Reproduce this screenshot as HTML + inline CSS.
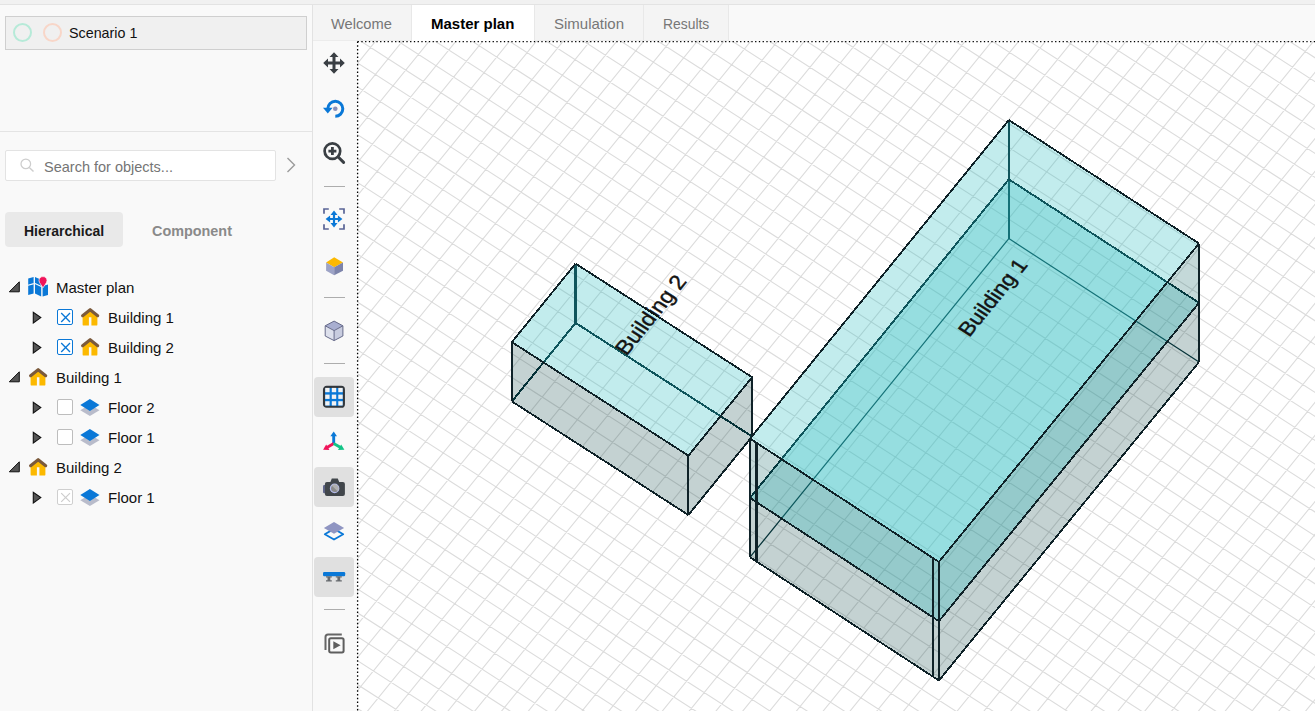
<!DOCTYPE html>
<html lang="en"><head><meta charset="utf-8"><title>Master plan</title>
<style>
*{box-sizing:border-box;margin:0;padding:0}
html,body{width:1315px;height:711px;overflow:hidden;background:#f9f9f9;font-family:"Liberation Sans", Arial, sans-serif;font-size:15px;color:#111}
.abs{position:absolute}
#topstrip{left:0;top:0;width:1315px;height:5px;background:#f1f1f1;border-bottom:1px solid #e3e3e3}
#left{left:0;top:5px;width:313px;height:706px;background:#f9f9f9;border-right:1px solid #e2e2e2}
#scn{left:5px;top:16px;width:302px;height:34px;background:#f0f0f0;border:1px solid #cfcfcf}
.ring{width:19px;height:19px;border-radius:50%;border:2.7px solid #b6ead8}
#sep1{left:0;top:131px;width:312px;height:1px;background:#e4e4e4}
#search{left:5px;top:150px;width:271px;height:31px;background:#fff;border:1px solid #e3e3e3;border-radius:2px}
.t{position:absolute;white-space:nowrap;line-height:20px;height:20px}
#hier{left:5px;top:212px;width:118px;height:35px;background:#e9e9e9;border-radius:4px}
.row{position:absolute;left:0;width:312px;height:30px}
.cb{position:absolute;width:16px;height:16px;background:#fff;border-radius:2px}
#tabs{left:313px;top:5px;width:1002px;height:36px;background:#f9f9f9}
.tab{position:absolute;top:0;height:36px;background:#f4f4f4;border-right:1px solid #e8e8e8;border-bottom:1px solid #ececec}
.tab.act{background:#fff;border-bottom:none;height:36px}
#tool{left:313px;top:40px;width:44px;height:671px;background:#f9f9f9;border-top:1px solid #ececec}
.hl{position:absolute;left:1px;width:40px;height:40px;border-radius:4px;background:#e0e0e0}
.sepl{position:absolute;left:11px;width:21px;height:1.4px;background:#adadad}
.ic{position:absolute;left:9px;width:24px;height:24px}
#canvas{left:357px;top:41px;width:958px;height:670px;overflow:hidden;background:#fff}
#dots{left:356px;top:40px;width:959px;height:671px;pointer-events:none}
</style></head><body>
<div id="topstrip" class="abs"></div>
<div id="left" class="abs"></div>
<div id="scn" class="abs"></div>
<div class="abs ring" style="left:12.5px;top:22.5px;border-color:#b6ead8"></div>
<div class="abs ring" style="left:42.5px;top:22.5px;border-color:#f8d6c8"></div>
<div class="t" style="left:69px;top:23px;font-size:14.3px">Scenario 1</div>
<div id="sep1" class="abs"></div>
<div id="search" class="abs"></div>
<svg class="abs" style="left:19px;top:157px" width="16" height="16" viewBox="0 0 16 16"><circle cx="6.8" cy="6.9" r="4.8" fill="none" stroke="#cdcdcd" stroke-width="1.25"/><path d="M10.3 10.4 L14.5 14.6" stroke="#cdcdcd" stroke-width="1.4"/></svg>
<div class="t" style="left:44px;top:157px;color:#757575;font-size:14.5px">Search for objects...</div>
<svg class="abs" style="left:285px;top:156px" width="12" height="18" viewBox="0 0 12 18"><path d="M2.5 2 L9.5 9 L2.5 16" fill="none" stroke="#9a9a9a" stroke-width="1.4"/></svg>
<div id="hier" class="abs"></div>
<div class="t" style="left:24px;top:221px;font-weight:bold;font-size:14px;color:#1a1a1a">Hierarchical</div>
<div class="t" style="left:152px;top:221px;font-weight:bold;font-size:14.4px;color:#8a8a8a">Component</div>
<svg class="abs" style="left:8px;top:280px" width="13" height="13" viewBox="0 0 13 13"><polygon points="1.3,11.8 11.3,11.8 11.3,1.8" fill="#555" stroke="#111" stroke-width="1" stroke-linejoin="miter"/></svg>
<svg class="abs" style="left:27px;top:276px" width="22" height="22" viewBox="0 0 22 22"><path d="M1.2 2.6 L6.6 1 L6.6 17.4 L1.2 19 Z" fill="#0a78d7"/><path d="M8 1 L14.2 3.8 L14.2 20.6 L8 17.6 Z" fill="#0a78d7"/><path d="M15.6 10 L21 8.4 L21 19 L15.6 20.6 Z" fill="#0a78d7"/><path d="M1 9.2 L6.8 7.6 M8 7.6 L14.4 10.6" stroke="#f9f9f9" stroke-width="1.1" fill="none"/><path d="M16 0.6 C13.6 0.6 12 2.3 12 4.5 C12 7 14.6 9.2 16 11.8 C17.4 9.2 20 7 20 4.5 C20 2.3 18.4 0.6 16 0.6 Z" fill="#f0145a" stroke="#f9f9f9" stroke-width="0.7"/></svg>
<div class="t" style="left:56px;top:278px">Master plan</div>
<svg class="abs" style="left:31px;top:310px" width="12" height="14" viewBox="0 0 12 14"><polygon points="2.3,2.2 2.3,13 9.8,7.6" fill="#555" stroke="#111" stroke-width="1.1"/></svg>
<div class="cb" style="left:57px;top:309px;border:1.3px solid #0a78d7"></div><svg class="abs" style="left:57px;top:309px" width="16" height="16" viewBox="0 0 16 16"><path d="M4.2 4.1 L13 12.9 M13 4.1 L4.2 12.9" stroke="#0a78d7" stroke-width="1.35"/></svg>
<svg class="abs" style="left:79px;top:306px" width="22" height="22" viewBox="0 0 22 22"><path d="M3.6 10 L11.15 4 L18.4 10 L18.4 18.4 A1.2 1.2 0 0 1 17.2 19.6 L12.4 19.6 L12.4 11.2 L9.9 11.2 L9.9 19.6 L4.8 19.6 A1.2 1.2 0 0 1 3.6 18.4 Z" fill="#fcb900"/><path d="M3.6 9.7 L11.15 3.7 L18.7 9.7" stroke="#7b5a3c" stroke-width="3.1" fill="none" stroke-linecap="round" stroke-linejoin="round"/></svg>
<div class="t" style="left:108px;top:308px">Building 1</div>
<svg class="abs" style="left:31px;top:340px" width="12" height="14" viewBox="0 0 12 14"><polygon points="2.3,2.2 2.3,13 9.8,7.6" fill="#555" stroke="#111" stroke-width="1.1"/></svg>
<div class="cb" style="left:57px;top:339px;border:1.3px solid #0a78d7"></div><svg class="abs" style="left:57px;top:339px" width="16" height="16" viewBox="0 0 16 16"><path d="M4.2 4.1 L13 12.9 M13 4.1 L4.2 12.9" stroke="#0a78d7" stroke-width="1.35"/></svg>
<svg class="abs" style="left:79px;top:336px" width="22" height="22" viewBox="0 0 22 22"><path d="M3.6 10 L11.15 4 L18.4 10 L18.4 18.4 A1.2 1.2 0 0 1 17.2 19.6 L12.4 19.6 L12.4 11.2 L9.9 11.2 L9.9 19.6 L4.8 19.6 A1.2 1.2 0 0 1 3.6 18.4 Z" fill="#fcb900"/><path d="M3.6 9.7 L11.15 3.7 L18.7 9.7" stroke="#7b5a3c" stroke-width="3.1" fill="none" stroke-linecap="round" stroke-linejoin="round"/></svg>
<div class="t" style="left:108px;top:338px">Building 2</div>
<svg class="abs" style="left:8px;top:370px" width="13" height="13" viewBox="0 0 13 13"><polygon points="1.3,11.8 11.3,11.8 11.3,1.8" fill="#555" stroke="#111" stroke-width="1" stroke-linejoin="miter"/></svg>
<svg class="abs" style="left:27px;top:366px" width="22" height="22" viewBox="0 0 22 22"><path d="M3.6 10 L11.15 4 L18.4 10 L18.4 18.4 A1.2 1.2 0 0 1 17.2 19.6 L12.4 19.6 L12.4 11.2 L9.9 11.2 L9.9 19.6 L4.8 19.6 A1.2 1.2 0 0 1 3.6 18.4 Z" fill="#fcb900"/><path d="M3.6 9.7 L11.15 3.7 L18.7 9.7" stroke="#7b5a3c" stroke-width="3.1" fill="none" stroke-linecap="round" stroke-linejoin="round"/></svg>
<div class="t" style="left:56px;top:368px">Building 1</div>
<svg class="abs" style="left:31px;top:400px" width="12" height="14" viewBox="0 0 12 14"><polygon points="2.3,2.2 2.3,13 9.8,7.6" fill="#555" stroke="#111" stroke-width="1.1"/></svg>
<div class="cb" style="left:57px;top:399px;border:1px solid #bdbdbd"></div>
<svg class="abs" style="left:79px;top:396px" width="22" height="22" viewBox="0 0 22 22"><polygon points="1.3,14.2 10.9,8.4 20.5,14.2 10.9,20.1" fill="#b9bccb"/><polygon points="1.3,9 10.9,3.1 20.5,9 10.9,14.9" fill="#0a78d7"/></svg>
<div class="t" style="left:108px;top:398px">Floor 2</div>
<svg class="abs" style="left:31px;top:430px" width="12" height="14" viewBox="0 0 12 14"><polygon points="2.3,2.2 2.3,13 9.8,7.6" fill="#555" stroke="#111" stroke-width="1.1"/></svg>
<div class="cb" style="left:57px;top:429px;border:1px solid #bdbdbd"></div>
<svg class="abs" style="left:79px;top:426px" width="22" height="22" viewBox="0 0 22 22"><polygon points="1.3,14.2 10.9,8.4 20.5,14.2 10.9,20.1" fill="#b9bccb"/><polygon points="1.3,9 10.9,3.1 20.5,9 10.9,14.9" fill="#0a78d7"/></svg>
<div class="t" style="left:108px;top:428px">Floor 1</div>
<svg class="abs" style="left:8px;top:460px" width="13" height="13" viewBox="0 0 13 13"><polygon points="1.3,11.8 11.3,11.8 11.3,1.8" fill="#555" stroke="#111" stroke-width="1" stroke-linejoin="miter"/></svg>
<svg class="abs" style="left:27px;top:456px" width="22" height="22" viewBox="0 0 22 22"><path d="M3.6 10 L11.15 4 L18.4 10 L18.4 18.4 A1.2 1.2 0 0 1 17.2 19.6 L12.4 19.6 L12.4 11.2 L9.9 11.2 L9.9 19.6 L4.8 19.6 A1.2 1.2 0 0 1 3.6 18.4 Z" fill="#fcb900"/><path d="M3.6 9.7 L11.15 3.7 L18.7 9.7" stroke="#7b5a3c" stroke-width="3.1" fill="none" stroke-linecap="round" stroke-linejoin="round"/></svg>
<div class="t" style="left:56px;top:458px">Building 2</div>
<svg class="abs" style="left:31px;top:490px" width="12" height="14" viewBox="0 0 12 14"><polygon points="2.3,2.2 2.3,13 9.8,7.6" fill="#555" stroke="#111" stroke-width="1.1"/></svg>
<div class="cb" style="left:57px;top:489px;border:1px solid #cfcfcf"></div><svg class="abs" style="left:57px;top:489px" width="16" height="16" viewBox="0 0 16 16"><path d="M4.2 4.1 L13 12.9 M13 4.1 L4.2 12.9" stroke="#cdcdcd" stroke-width="1.2"/></svg>
<svg class="abs" style="left:79px;top:486px" width="22" height="22" viewBox="0 0 22 22"><polygon points="1.3,14.2 10.9,8.4 20.5,14.2 10.9,20.1" fill="#b9bccb"/><polygon points="1.3,9 10.9,3.1 20.5,9 10.9,14.9" fill="#0a78d7"/></svg>
<div class="t" style="left:108px;top:488px">Floor 1</div>
<div id="tabs" class="abs">
<div class="tab" style="left:0px;width:99px"><div class="t" style="left:18px;top:9px;font-size:14.7px;color:#777">Welcome</div></div>
<div class="tab act" style="left:99px;width:123px"><div class="t" style="left:19px;top:9px;font-size:15px;font-weight:bold;color:#000">Master plan</div></div>
<div class="tab" style="left:222px;width:109px"><div class="t" style="left:19px;top:9px;font-size:15px;color:#777">Simulation</div></div>
<div class="tab" style="left:331px;width:85px"><div class="t" style="left:19px;top:9px;font-size:15px;color:#777;transform:scaleX(0.925);transform-origin:0 0">Results</div></div>
</div>
<div id="tool" class="abs">
<div class="hl" style="top:336px"></div>
<div class="hl" style="top:426px"></div>
<div class="hl" style="top:516px"></div>
<div class="sepl" style="top:144.6px"></div>
<div class="sepl" style="top:255.8px"></div>
<div class="sepl" style="top:321.7px"></div>
<div class="sepl" style="top:567.7px"></div>
<svg class="ic" style="top:10px" width="24" height="24" viewBox="0 0 24 24"><polygon points="10.50,10.50 10.50,6.00 7.50,6.00 12.00,1.20 16.50,6.00 13.50,6.00 13.50,10.50 13.50,10.50 18.00,10.50 18.00,7.50 22.80,12.00 18.00,16.50 18.00,13.50 13.50,13.50 13.50,13.50 13.50,18.00 16.50,18.00 12.00,22.80 7.50,18.00 10.50,18.00 10.50,13.50 10.50,13.50 6.00,13.50 6.00,16.50 1.20,12.00 6.00,7.50 6.00,10.50 10.50,10.50" fill="#3a3f44"/></svg>
<svg class="ic" style="top:55px" width="24" height="24" viewBox="0 0 24 24"><path d="M5.8 12.8 A7.5 7.5 0 1 1 13.3 20.3" fill="none" stroke="#0a78d7" stroke-width="3"/><polygon points="1.0,11.8 10.6,11.8 5.8,17.6" fill="#0a78d7"/><circle cx="13.3" cy="12.8" r="2.3" fill="#8a8fb8"/></svg>
<svg class="ic" style="top:100px" width="24" height="24" viewBox="0 0 24 24"><circle cx="10.4" cy="10.1" r="7.8" fill="none" stroke="#3a3f44" stroke-width="2.7"/><path d="M16.2 16 L21.6 21.4" stroke="#3a3f44" stroke-width="3" stroke-linecap="round"/><path d="M6.4 10.1 H14.4 M10.4 6.1 V14.1" stroke="#3a3f44" stroke-width="2.8"/></svg>
<svg class="ic" style="top:166px" width="24" height="24" viewBox="0 0 24 24"><path d="M2 6.8 V2 H6.8 M17.2 2 H22 V6.8 M22 17.2 V22 H17.2 M6.8 22 H2 V17.2" fill="none" stroke="#5a6496" stroke-width="1.7"/><polygon points="10.90,10.90 10.90,8.10 8.50,8.10 12.00,3.60 15.50,8.10 13.10,8.10 13.10,10.90 13.10,10.90 15.90,10.90 15.90,8.50 20.40,12.00 15.90,15.50 15.90,13.10 13.10,13.10 13.10,13.10 13.10,15.90 15.50,15.90 12.00,20.40 8.50,15.90 10.90,15.90 10.90,13.10 10.90,13.10 8.10,13.10 8.10,15.50 3.60,12.00 8.10,8.50 8.10,10.90 10.90,10.90" fill="#0a78d7"/></svg>
<svg class="ic" style="top:213px" width="24" height="24" viewBox="0 0 24 24"><polygon points="12.2,3.3 21,8.4 12.2,13.2 4.1,8.4" fill="#fcb900"/><polygon points="4.1,8.4 12.2,13.2 12.2,21.3 4.1,16.8" fill="#9da3c6"/><polygon points="21,8.4 12.2,13.2 12.2,21.3 21,16.8" fill="#7d84ab"/></svg>
<svg class="ic" style="top:278px" width="24" height="24" viewBox="0 0 24 24"><polygon points="3.2,6.8 12.1,11.6 12.1,21.6 3.2,17" fill="#dde0ec"/><polygon points="20.9,6.8 12.1,11.6 12.1,21.6 20.9,17" fill="#c8ccdf"/><polygon points="12.1,2.1 20.9,6.8 12.1,11.6 3.2,6.8" fill="#a8aed0"/><path d="M12.1 2.1 L20.9 6.8 V17 L12.1 21.6 L3.2 17 V6.8 Z M3.2 6.8 L12.1 11.6 L20.9 6.8 M12.1 11.6 V21.6" fill="none" stroke="#676b8a" stroke-width="1" stroke-linejoin="round"/></svg>
<svg class="ic" style="top:344px" width="24" height="24" viewBox="0 0 24 24"><rect x="2" y="1.9" width="19.9" height="19.9" rx="2.6" fill="#0a78d7" stroke="#32373c" stroke-width="2.1"/><g fill="#f2f2f2"><rect x="3.2" y="2.9" width="4.4" height="4.3"/><rect x="9.8" y="2.9" width="4.4" height="4.3"/><rect x="16.3" y="2.9" width="4.4" height="4.3"/><rect x="3.2" y="9.6" width="4.4" height="4.3"/><rect x="9.8" y="9.6" width="4.4" height="4.3"/><rect x="16.3" y="9.6" width="4.4" height="4.3"/><rect x="3.2" y="16.2" width="4.4" height="4.3"/><rect x="9.8" y="16.2" width="4.4" height="4.3"/><rect x="16.3" y="16.2" width="4.4" height="4.3"/></g></svg>
<svg class="ic" style="top:389px" width="24" height="24" viewBox="0 0 24 24"><path d="M11.7 13.6 V5" stroke="#0a78d7" stroke-width="2.9"/><polygon points="11.7,1.6 15,6.2 8.4,6.2" fill="#0a78d7"/><path d="M11.7 13.4 L5 17.4" stroke="#f0145a" stroke-width="2.9"/><polygon points="1.1,19.8 4.2,14.6 7.4,20" fill="#f0145a"/><path d="M11.7 13.4 L18.6 17.4" stroke="#12c486" stroke-width="2.9"/><polygon points="22.4,19.8 19.2,14.6 16,20" fill="#12c486"/></svg>
<svg class="ic" style="top:434px" width="24" height="24" viewBox="0 0 24 24"><rect x="1" y="10" width="4.4" height="8.2" rx="1.2" fill="#5f658a"/><path d="M4.9 6.9 H8.4 L9.8 3.6 H15.8 L17.2 6.9 H20.9 A2 2 0 0 1 22.9 8.9 V18.9 A2 2 0 0 1 20.9 20.9 H4.9 A2 2 0 0 1 2.9 18.9 V8.9 A2 2 0 0 1 4.9 6.9 Z" fill="#41464b"/><circle cx="12.6" cy="13.4" r="4.2" fill="#8c8c8c" stroke="#b4bbea" stroke-width="1.2"/><path d="M9.7 10.5 A4.1 4.1 0 0 1 15.5 16.3 Z" fill="#b9b9b9" opacity="0.8"/></svg>
<svg class="ic" style="top:479px" width="24" height="24" viewBox="0 0 24 24"><polygon points="2.8,14.2 12,8.9 21.2,14.2 12,19.5" fill="none" stroke="#0a78d7" stroke-width="1.8" stroke-linejoin="round"/><polygon points="1.9,8 12,2.1 22.1,8 12,13.8" fill="#8f95c2"/></svg>
<svg class="ic" style="top:524px" width="24" height="24" viewBox="0 0 24 24"><rect x="1" y="7" width="22.2" height="4.3" rx="1.2" fill="#0a78d7"/><path d="M4 11.3 H9.8 V12.6 H8.3 V15.2 H9.8 V16.6 H4 V15.2 H5.5 V12.6 H4 Z M13.8 11.3 H19.8 V12.6 H18.2 V15.2 H19.8 V16.6 H13.8 V15.2 H15.4 V12.6 H13.8 Z" fill="#666a6e"/></svg>
<svg class="ic" style="top:590px" width="24" height="24" viewBox="0 0 24 24"><path d="M3.5 19 V6 A2.5 2.5 0 0 1 6 3.5 H19.8" fill="none" stroke="#666" stroke-width="2"/><rect x="7.2" y="7.2" width="14.4" height="14.2" rx="1.6" fill="none" stroke="#5e5e5e" stroke-width="2"/><polygon points="11.3,10.2 11.3,18.2 18.6,14.2" fill="#5e5e5e"/></svg>
</div>
<div id="canvas" class="abs"><svg id="scene" width="958" height="670" viewBox="0 0 958 670">
<rect width="958" height="670" fill="#fff"/>
<path d="M-169.4 -1880.5 L2646.6 -67.7 M-182.2 -1864.8 L2633.8 -52.0 M-194.9 -1849.1 L2621.1 -36.3 M-207.7 -1833.4 L2608.3 -20.6 M-220.4 -1817.7 L2595.6 -4.9 M-233.2 -1802.0 L2582.8 10.8 M-245.9 -1786.3 L2570.1 26.5 M-258.7 -1770.6 L2557.3 42.2 M-271.4 -1754.9 L2544.6 57.9 M-284.2 -1739.2 L2531.8 73.6 M-296.9 -1723.5 L2519.1 89.3 M-309.7 -1707.8 L2506.3 105.0 M-322.4 -1692.1 L2493.6 120.7 M-335.2 -1676.4 L2480.8 136.4 M-347.9 -1660.7 L2468.1 152.1 M-360.7 -1645.0 L2455.3 167.8 M-373.4 -1629.3 L2442.6 183.5 M-386.2 -1613.6 L2429.8 199.2 M-398.9 -1597.9 L2417.1 214.9 M-411.7 -1582.2 L2404.3 230.6 M-424.4 -1566.5 L2391.6 246.3 M-437.2 -1550.8 L2378.8 262.0 M-449.9 -1535.1 L2366.1 277.7 M-462.7 -1519.4 L2353.3 293.4 M-475.4 -1503.7 L2340.6 309.1 M-488.2 -1488.0 L2327.8 324.8 M-500.9 -1472.3 L2315.1 340.5 M-513.7 -1456.6 L2302.3 356.2 M-526.4 -1440.9 L2289.6 371.9 M-539.2 -1425.2 L2276.8 387.6 M-551.9 -1409.5 L2264.1 403.3 M-564.7 -1393.8 L2251.3 419.0 M-577.4 -1378.1 L2238.6 434.7 M-590.2 -1362.4 L2225.8 450.4 M-602.9 -1346.7 L2213.1 466.1 M-615.7 -1331.0 L2200.3 481.8 M-628.4 -1315.3 L2187.6 497.5 M-641.2 -1299.6 L2174.8 513.2 M-653.9 -1283.9 L2162.1 528.9 M-666.7 -1268.2 L2149.3 544.6 M-679.4 -1252.5 L2136.6 560.3 M-692.2 -1236.8 L2123.8 576.0 M-704.9 -1221.1 L2111.1 591.7 M-717.7 -1205.4 L2098.3 607.4 M-730.4 -1189.7 L2085.6 623.1 M-743.1 -1174.0 L2072.8 638.8 M-755.9 -1158.3 L2060.1 654.5 M-768.6 -1142.6 L2047.3 670.2 M-781.4 -1126.9 L2034.6 685.9 M-794.1 -1111.2 L2021.8 701.6 M-806.9 -1095.5 L2009.1 717.3 M-819.6 -1079.8 L1996.3 733.0 M-832.4 -1064.1 L1983.6 748.7 M-845.1 -1048.4 L1970.8 764.4 M-857.9 -1032.7 L1958.1 780.1 M-870.6 -1017.0 L1945.3 795.8 M-883.4 -1001.3 L1932.6 811.5 M-896.1 -985.6 L1919.8 827.2 M-908.9 -969.9 L1907.1 842.9 M-921.6 -954.2 L1894.3 858.6 M-934.4 -938.5 L1881.6 874.3 M-947.1 -922.8 L1868.8 890.0 M-959.9 -907.1 L1856.1 905.7 M-972.6 -891.4 L1843.3 921.4 M-985.4 -875.7 L1830.6 937.1 M-998.1 -860.0 L1817.8 952.8 M-1010.9 -844.3 L1805.1 968.5 M-1023.6 -828.6 L1792.3 984.2 M-1036.4 -812.9 L1779.6 999.9 M-1049.2 -797.2 L1766.8 1015.6 M-1061.9 -781.5 L1754.1 1031.3 M-1074.7 -765.8 L1741.3 1047.0 M-1087.4 -750.1 L1728.6 1062.7 M-1100.2 -734.4 L1715.8 1078.4 M-1112.9 -718.7 L1703.1 1094.1 M-1125.7 -703.0 L1690.3 1109.8 M-1138.4 -687.3 L1677.6 1125.5 M-1151.2 -671.6 L1664.8 1141.2 M-1163.9 -655.9 L1652.1 1156.9 M-1176.7 -640.2 L1639.3 1172.6 M-1189.4 -624.5 L1626.6 1188.3 M-1202.2 -608.8 L1613.8 1204.0 M-1214.9 -593.1 L1601.1 1219.7 M-1227.7 -577.4 L1588.3 1235.4 M-1240.4 -561.7 L1575.6 1251.1 M-1253.2 -546.0 L1562.8 1266.8 M-1265.9 -530.3 L1550.1 1282.5 M-1278.7 -514.6 L1537.3 1298.2 M-1291.4 -498.9 L1524.6 1313.9 M-1304.2 -483.2 L1511.8 1329.6 M-1316.9 -467.5 L1499.1 1345.3 M-1329.7 -451.8 L1486.3 1361.0 M-1342.4 -436.1 L1473.6 1376.7 M-1355.2 -420.4 L1460.8 1392.4 M-1367.9 -404.7 L1448.1 1408.1 M-1380.7 -389.0 L1435.3 1423.8 M-1393.4 -373.3 L1422.6 1439.5 M-1406.2 -357.6 L1409.8 1455.2 M-1418.9 -341.9 L1397.1 1470.9 M-1431.7 -326.2 L1384.3 1486.6 M-1444.4 -310.5 L1371.6 1502.3 M-1457.2 -294.8 L1358.8 1518.0 M-1469.9 -279.1 L1346.1 1533.7 M-1482.7 -263.4 L1333.3 1549.4 M-1495.4 -247.7 L1320.6 1565.1 M-1508.2 -232.0 L1307.8 1580.8 M-1520.9 -216.3 L1295.1 1596.5 M-1533.7 -200.6 L1282.3 1612.2 M-1546.4 -184.9 L1269.6 1627.9 M-1559.2 -169.2 L1256.8 1643.6 M-1571.9 -153.5 L1244.1 1659.3 M-1584.7 -137.8 L1231.3 1675.0 M-1597.4 -122.1 L1218.6 1690.7 M-1610.2 -106.4 L1205.8 1706.4 M-1622.9 -90.7 L1193.1 1722.1 M-1635.7 -75.0 L1180.3 1737.8 M-1648.4 -59.3 L1167.6 1753.5 M-1661.2 -43.6 L1154.8 1769.2 M-1673.9 -27.9 L1142.1 1784.9 M-1686.7 -12.2 L1129.3 1800.6 M-1699.4 3.5 L1116.6 1816.3 M-1712.2 19.2 L1103.8 1832.0 M-1724.9 34.9 L1091.1 1847.7 M-1737.7 50.6 L1078.3 1863.4 M-1750.4 66.3 L1065.6 1879.1 M-1763.2 82.0 L1052.8 1894.8 M-1775.9 97.7 L1040.1 1910.5 M-1788.7 113.4 L1027.3 1926.2 M-1801.4 129.1 L1014.6 1941.9 M-1814.2 144.8 L1001.8 1957.6 M-1826.9 160.5 L989.1 1973.3 M-1839.7 176.2 L976.3 1989.0 M-1852.4 191.9 L963.6 2004.7 M-1865.2 207.6 L950.8 2020.4 M-1877.9 223.3 L938.1 2036.1 M-1890.7 239.0 L925.3 2051.8 M-1903.4 254.7 L912.6 2067.5 M-1916.2 270.4 L899.8 2083.2 M-1928.9 286.1 L887.1 2098.9 M-1941.7 301.8 L874.3 2114.6 M-1954.4 317.5 L861.6 2130.3 M-1967.2 333.2 L848.8 2146.0 M-1979.9 348.9 L836.1 2161.7 M-1992.7 364.6 L823.3 2177.4 M-2005.4 380.3 L810.6 2193.1 M-2018.2 396.0 L797.8 2208.8 M-2030.9 411.7 L785.1 2224.5 M-2043.7 427.4 L772.3 2240.2 M-2056.4 443.1 L759.6 2255.9 M-2069.2 458.8 L746.8 2271.6 M-2081.9 474.5 L734.1 2287.3 M-2094.7 490.2 L721.3 2303.0 M-2107.4 505.9 L708.6 2318.7 M-2120.2 521.6 L695.8 2334.4 M-2132.9 537.3 L683.1 2350.1 M-2145.7 553.0 L670.3 2365.8 M-2158.4 568.7 L657.6 2381.5 M-2171.2 584.4 L644.9 2397.2 M-2183.9 600.1 L632.1 2412.9 M-2196.7 615.8 L619.4 2428.6 M-169.4 -1880.5 L-2209.4 631.5 M-151.8 -1869.2 L-2191.8 642.8 M-134.2 -1857.8 L-2174.2 654.2 M-116.6 -1846.5 L-2156.6 665.5 M-99.0 -1835.2 L-2139.0 676.8 M-81.4 -1823.8 L-2121.4 688.1 M-63.8 -1812.5 L-2103.8 699.5 M-46.2 -1801.2 L-2086.2 710.8 M-28.6 -1789.9 L-2068.6 722.1 M-11.0 -1778.5 L-2051.0 733.5 M6.6 -1767.2 L-2033.4 744.8 M24.2 -1755.9 L-2015.8 756.1 M41.8 -1744.5 L-1998.2 767.5 M59.4 -1733.2 L-1980.6 778.8 M77.0 -1721.9 L-1963.0 790.1 M94.6 -1710.6 L-1945.4 801.4 M112.2 -1699.2 L-1927.8 812.8 M129.8 -1687.9 L-1910.2 824.1 M147.4 -1676.6 L-1892.6 835.4 M165.0 -1665.2 L-1875.0 846.8 M182.6 -1653.9 L-1857.4 858.1 M200.2 -1642.6 L-1839.8 869.4 M217.8 -1631.2 L-1822.2 880.8 M235.4 -1619.9 L-1804.6 892.1 M253.0 -1608.6 L-1787.0 903.4 M270.6 -1597.2 L-1769.4 914.8 M288.2 -1585.9 L-1751.8 926.1 M305.8 -1574.6 L-1734.2 937.4 M323.4 -1563.3 L-1716.6 948.7 M341.0 -1551.9 L-1699.0 960.1 M358.6 -1540.6 L-1681.4 971.4 M376.2 -1529.3 L-1663.8 982.7 M393.8 -1517.9 L-1646.2 994.1 M411.4 -1506.6 L-1628.6 1005.4 M429.0 -1495.3 L-1611.0 1016.7 M446.6 -1484.0 L-1593.4 1028.0 M464.2 -1472.6 L-1575.8 1039.4 M481.8 -1461.3 L-1558.2 1050.7 M499.4 -1450.0 L-1540.6 1062.0 M517.0 -1438.6 L-1523.0 1073.4 M534.6 -1427.3 L-1505.4 1084.7 M552.2 -1416.0 L-1487.8 1096.0 M569.8 -1404.6 L-1470.2 1107.4 M587.4 -1393.3 L-1452.6 1118.7 M605.0 -1382.0 L-1435.0 1130.0 M622.6 -1370.7 L-1417.4 1141.3 M640.2 -1359.3 L-1399.8 1152.7 M657.8 -1348.0 L-1382.2 1164.0 M675.4 -1336.7 L-1364.6 1175.3 M693.0 -1325.3 L-1347.0 1186.7 M710.6 -1314.0 L-1329.4 1198.0 M728.2 -1302.7 L-1311.8 1209.3 M745.8 -1291.3 L-1294.2 1220.7 M763.4 -1280.0 L-1276.6 1232.0 M781.0 -1268.7 L-1259.0 1243.3 M798.6 -1257.3 L-1241.4 1254.7 M816.2 -1246.0 L-1223.8 1266.0 M833.8 -1234.7 L-1206.2 1277.3 M851.4 -1223.4 L-1188.6 1288.6 M869.0 -1212.0 L-1171.0 1300.0 M886.6 -1200.7 L-1153.4 1311.3 M904.2 -1189.4 L-1135.8 1322.6 M921.8 -1178.0 L-1118.2 1334.0 M939.4 -1166.7 L-1100.6 1345.3 M957.0 -1155.4 L-1083.0 1356.6 M974.6 -1144.0 L-1065.4 1368.0 M992.2 -1132.7 L-1047.8 1379.3 M1009.8 -1121.4 L-1030.2 1390.6 M1027.4 -1110.1 L-1012.6 1401.9 M1045.0 -1098.7 L-995.0 1413.3 M1062.6 -1087.4 L-977.4 1424.6 M1080.2 -1076.1 L-959.8 1435.9 M1097.8 -1064.7 L-942.2 1447.3 M1115.4 -1053.4 L-924.6 1458.6 M1133.0 -1042.1 L-907.0 1469.9 M1150.6 -1030.8 L-889.4 1481.2 M1168.2 -1019.4 L-871.8 1492.6 M1185.8 -1008.1 L-854.2 1503.9 M1203.4 -996.8 L-836.6 1515.2 M1221.0 -985.4 L-819.0 1526.6 M1238.6 -974.1 L-801.4 1537.9 M1256.2 -962.8 L-783.8 1549.2 M1273.8 -951.4 L-766.2 1560.6 M1291.4 -940.1 L-748.6 1571.9 M1309.0 -928.8 L-731.0 1583.2 M1326.6 -917.5 L-713.4 1594.5 M1344.2 -906.1 L-695.8 1605.9 M1361.8 -894.8 L-678.2 1617.2 M1379.4 -883.5 L-660.6 1628.5 M1397.0 -872.1 L-643.0 1639.9 M1414.6 -860.8 L-625.4 1651.2 M1432.2 -849.5 L-607.8 1662.5 M1449.8 -838.1 L-590.2 1673.9 M1467.4 -826.8 L-572.6 1685.2 M1485.0 -815.5 L-555.0 1696.5 M1502.6 -804.2 L-537.4 1707.8 M1520.2 -792.8 L-519.8 1719.2 M1537.8 -781.5 L-502.2 1730.5 M1555.4 -770.2 L-484.6 1741.8 M1573.0 -758.8 L-467.0 1753.2 M1590.6 -747.5 L-449.4 1764.5 M1608.2 -736.2 L-431.8 1775.8 M1625.8 -724.8 L-414.2 1787.2 M1643.4 -713.5 L-396.6 1798.5 M1661.0 -702.2 L-379.0 1809.8 M1678.6 -690.9 L-361.4 1821.2 M1696.2 -679.5 L-343.8 1832.5 M1713.8 -668.2 L-326.2 1843.8 M1731.4 -656.9 L-308.6 1855.1 M1749.0 -645.5 L-291.0 1866.5 M1766.6 -634.2 L-273.4 1877.8 M1784.2 -622.9 L-255.8 1889.1 M1801.8 -611.5 L-238.2 1900.5 M1819.4 -600.2 L-220.6 1911.8 M1837.0 -588.9 L-203.0 1923.1 M1854.6 -577.5 L-185.4 1934.5 M1872.2 -566.2 L-167.8 1945.8 M1889.8 -554.9 L-150.2 1957.1 M1907.4 -543.6 L-132.6 1968.4 M1925.0 -532.2 L-115.0 1979.8 M1942.6 -520.9 L-97.4 1991.1 M1960.2 -509.6 L-79.8 2002.4 M1977.8 -498.2 L-62.2 2013.8 M1995.4 -486.9 L-44.6 2025.1 M2013.0 -475.6 L-27.0 2036.4 M2030.6 -464.2 L-9.4 2047.8 M2048.2 -452.9 L8.2 2059.1 M2065.8 -441.6 L25.8 2070.4 M2083.4 -430.3 L43.4 2081.7 M2101.0 -418.9 L61.0 2093.1 M2118.6 -407.6 L78.6 2104.4 M2136.2 -396.3 L96.2 2115.7 M2153.8 -384.9 L113.8 2127.1 M2171.4 -373.6 L131.4 2138.4 M2189.0 -362.3 L149.0 2149.7 M2206.6 -351.0 L166.6 2161.1 M2224.2 -339.6 L184.2 2172.4 M2241.8 -328.3 L201.8 2183.7 M2259.4 -317.0 L219.4 2195.0 M2277.0 -305.6 L237.0 2206.4 M2294.6 -294.3 L254.6 2217.7 M2312.2 -283.0 L272.2 2229.0 M2329.8 -271.6 L289.8 2240.4 M2347.4 -260.3 L307.4 2251.7 M2365.0 -249.0 L325.0 2263.0 M2382.6 -237.7 L342.6 2274.3 M2400.2 -226.3 L360.2 2285.7 M2417.8 -215.0 L377.8 2297.0 M2435.4 -203.7 L395.4 2308.3 M2453.0 -192.3 L413.0 2319.7 M2470.6 -181.0 L430.6 2331.0 M2488.2 -169.7 L448.2 2342.3 M2505.8 -158.3 L465.8 2353.7 M2523.4 -147.0 L483.4 2365.0 M2541.0 -135.7 L501.0 2376.3 M2558.6 -124.3 L518.6 2387.7 M2576.2 -113.0 L536.2 2399.0 M2593.8 -101.7 L553.8 2410.3 M2611.4 -90.4 L571.4 2421.6 M2629.0 -79.0 L589.0 2433.0" stroke="#dcdcdc" stroke-width="1.1" fill="none"/>
<line x1="218.6" y1="222.6" x2="218.6" y2="281.9" stroke="#072f37" stroke-width="2.40" shape-rendering="crispEdges"/>
<line x1="218.6" y1="281.9" x2="395.1" y2="395.5" stroke="#072f37" stroke-width="2.00" shape-rendering="crispEdges"/>
<line x1="218.6" y1="281.9" x2="154.9" y2="360.4" stroke="#072f37" stroke-width="2.00" shape-rendering="crispEdges"/>
<polygon points="218.6,222.6 395.1,336.2 331.4,414.7 154.9,301.1" fill="rgba(36,187,190,0.28)"/>
<polygon points="154.9,301.1 331.4,414.7 331.4,474.0 154.9,360.4" fill="rgba(0,62,62,0.23)"/>
<polygon points="331.4,414.7 395.1,336.2 395.1,395.5 331.4,474.0" fill="rgba(0,62,62,0.23)"/>
<line x1="218.6" y1="222.6" x2="395.1" y2="336.2" stroke="#0f2228" stroke-width="1.85" shape-rendering="crispEdges"/>
<line x1="395.1" y1="336.2" x2="331.4" y2="414.7" stroke="#0f2228" stroke-width="1.85" shape-rendering="crispEdges"/>
<line x1="331.4" y1="414.7" x2="154.9" y2="301.1" stroke="#0f2228" stroke-width="1.85" shape-rendering="crispEdges"/>
<line x1="154.9" y1="301.1" x2="218.6" y2="222.6" stroke="#0f2228" stroke-width="1.85" shape-rendering="crispEdges"/>
<line x1="154.9" y1="301.1" x2="154.9" y2="360.4" stroke="#0f2228" stroke-width="1.85" shape-rendering="crispEdges"/>
<line x1="331.4" y1="414.7" x2="331.4" y2="474.0" stroke="#0f2228" stroke-width="1.85" shape-rendering="crispEdges"/>
<line x1="395.1" y1="336.2" x2="395.1" y2="395.5" stroke="#0f2228" stroke-width="1.85" shape-rendering="crispEdges"/>
<line x1="154.9" y1="360.4" x2="331.4" y2="474.0" stroke="#0f2228" stroke-width="1.85" shape-rendering="crispEdges"/>
<line x1="331.4" y1="474.0" x2="395.1" y2="395.5" stroke="#0f2228" stroke-width="1.85" shape-rendering="crispEdges"/>
<line x1="651.8" y1="138.3" x2="651.8" y2="197.6" stroke="#072f37" stroke-width="2.40" shape-rendering="crispEdges"/>
<line x1="651.8" y1="197.6" x2="842.0" y2="321.1" stroke="#072f37" stroke-width="1.20"/>
<line x1="651.8" y1="197.6" x2="393.0" y2="516.2" stroke="#072f37" stroke-width="1.20"/>
<polygon points="651.8,138.3 842.0,261.8 581.9,580.2 393.0,456.9" fill="rgba(36,187,190,0.28)"/>
<line x1="651.8" y1="138.3" x2="842.0" y2="261.8" stroke="#072f37" stroke-width="1.90" shape-rendering="crispEdges"/>
<line x1="651.8" y1="138.3" x2="393.0" y2="456.9" stroke="#072f37" stroke-width="1.90" shape-rendering="crispEdges"/>
<line x1="651.8" y1="79.0" x2="651.8" y2="138.3" stroke="#072f37" stroke-width="2.40" shape-rendering="crispEdges"/>
<polygon points="651.8,79.0 842.0,202.5 581.9,520.9 393.0,397.6" fill="rgba(36,187,190,0.28)"/>
<polygon points="393.0,456.9 581.9,580.2 581.9,639.5 393.0,516.2" fill="rgba(0,62,62,0.23)"/>
<polygon points="581.9,580.2 842.0,261.8 842.0,321.1 581.9,639.5" fill="rgba(0,62,62,0.23)"/>
<polygon points="393.0,397.6 581.9,520.9 581.9,580.2 393.0,456.9" fill="rgba(0,92,90,0.23)"/>
<polygon points="581.9,520.9 842.0,202.5 842.0,261.8 581.9,580.2" fill="rgba(0,92,90,0.23)"/>
<line x1="842.0" y1="261.8" x2="581.9" y2="580.2" stroke="#0f2228" stroke-width="1.85" shape-rendering="crispEdges"/>
<line x1="581.9" y1="580.2" x2="393.0" y2="456.9" stroke="#0f2228" stroke-width="1.85" shape-rendering="crispEdges"/>
<line x1="393.0" y1="456.9" x2="393.0" y2="516.2" stroke="#0f2228" stroke-width="1.85" shape-rendering="crispEdges"/>
<line x1="581.9" y1="580.2" x2="581.9" y2="639.5" stroke="#0f2228" stroke-width="1.85" shape-rendering="crispEdges"/>
<line x1="842.0" y1="261.8" x2="842.0" y2="321.1" stroke="#0f2228" stroke-width="1.85" shape-rendering="crispEdges"/>
<line x1="393.0" y1="516.2" x2="581.9" y2="639.5" stroke="#0f2228" stroke-width="1.85" shape-rendering="crispEdges"/>
<line x1="581.9" y1="639.5" x2="842.0" y2="321.1" stroke="#0f2228" stroke-width="1.85" shape-rendering="crispEdges"/>
<line x1="399.8" y1="461.3" x2="399.8" y2="520.6" stroke="#0f2228" stroke-width="2.80" shape-rendering="crispEdges"/>
<line x1="575.7" y1="576.1" x2="575.7" y2="635.4" stroke="#0f2228" stroke-width="2.00" shape-rendering="crispEdges"/>
<line x1="651.8" y1="79.0" x2="842.0" y2="202.5" stroke="#0f2228" stroke-width="1.85" shape-rendering="crispEdges"/>
<line x1="842.0" y1="202.5" x2="581.9" y2="520.9" stroke="#0f2228" stroke-width="1.85" shape-rendering="crispEdges"/>
<line x1="581.9" y1="520.9" x2="393.0" y2="397.6" stroke="#0f2228" stroke-width="1.85" shape-rendering="crispEdges"/>
<line x1="393.0" y1="397.6" x2="651.8" y2="79.0" stroke="#0f2228" stroke-width="1.85" shape-rendering="crispEdges"/>
<line x1="393.0" y1="397.6" x2="393.0" y2="456.9" stroke="#0f2228" stroke-width="1.85" shape-rendering="crispEdges"/>
<line x1="581.9" y1="520.9" x2="581.9" y2="580.2" stroke="#0f2228" stroke-width="1.85" shape-rendering="crispEdges"/>
<line x1="842.0" y1="202.5" x2="842.0" y2="261.8" stroke="#0f2228" stroke-width="1.85" shape-rendering="crispEdges"/>
<line x1="393.0" y1="456.9" x2="581.9" y2="580.2" stroke="#0f2228" stroke-width="1.85" shape-rendering="crispEdges"/>
<line x1="581.9" y1="580.2" x2="842.0" y2="261.8" stroke="#0f2228" stroke-width="1.85" shape-rendering="crispEdges"/>
<line x1="399.8" y1="402.0" x2="399.8" y2="461.3" stroke="#0f2228" stroke-width="2.80" shape-rendering="crispEdges"/>
<line x1="575.7" y1="516.8" x2="575.7" y2="576.1" stroke="#0f2228" stroke-width="2.00" shape-rendering="crispEdges"/>
<text transform="matrix(0.6304 -0.7763 0.8408 0.5413 269.6 315.4)" font-family="Liberation Sans, Arial, sans-serif" font-size="22.0" fill="#111" stroke="#111" stroke-width="0.45" opacity="0.99">Building 2</text>
<text transform="matrix(0.6304 -0.7763 0.8408 0.5413 612.2 296.8)" font-family="Liberation Sans, Arial, sans-serif" font-size="21.4" fill="#111" stroke="#111" stroke-width="0.45" opacity="0.99">Building 1</text>
</svg></div>
<svg id="dots" class="abs" width="959" height="671" viewBox="0 0 959 671"><path d="M1.6 1.6 H959 M1.6 1.6 V671" stroke="#000" stroke-width="1.3" stroke-dasharray="1.3 2.45" fill="none"/></svg>
</body></html>
